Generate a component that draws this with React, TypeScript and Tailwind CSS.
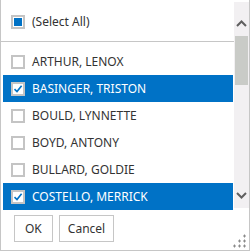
import React from 'react';

const names = [
    { name: 'ARTHUR, LENOX', checked: false },
    { name: 'BASINGER, TRISTON', checked: true },
    { name: 'BOULD, LYNNETTE', checked: false },
    { name: 'BOYD, ANTONY', checked: false },
    { name: 'BULLARD, GOLDIE', checked: false },
    { name: 'COSTELLO, MERRICK', checked: true },
];

const CheckBox: React.FC<{ checked?: boolean }> = ({ checked }) => (
    <div className="w-[14px] h-[14px] border-2 border-[#c4c4c4] bg-white flex items-center justify-center shrink-0">
        {checked && (
            <svg width="10" height="10" viewBox="0 0 10 10">
                <path d="M1.5 5.2 L4 7.6 L8.6 1.8" fill="none" stroke="#0072c6" strokeWidth="1.6" />
            </svg>
        )}
    </div>
);

export default function App() {
    return (
        <div
            className="w-[250px] h-[251px] bg-white border-l border-r border-b border-[#c6c6c6] flex flex-col text-[12px] text-[#333]"
            style={{ fontFamily: '"Noto Sans", "Open Sans", sans-serif' }}
        >
            <div className="h-[210px] flex">
                {/* list area */}
                <div className="flex-1 flex flex-col overflow-hidden">
                    <div className="h-[41px] shrink-0 flex items-center pl-[10px] gap-[7px] pt-[2px]">
                        <div className="w-[14px] h-[14px] border-2 border-[#c4c4c4] bg-white flex items-center justify-center">
                            <div className="w-[8px] h-[8px] bg-[#0072c6]" />
                        </div>
                        <span>(Select All)</span>
                    </div>
                    <div className="h-px bg-[#c6c6c6] shrink-0" />
                    <div className="pt-[6px] pl-[2px] pr-[1px] flex flex-col">
                        {names.map((n) => (
                            <div
                                key={n.name}
                                className={`h-[27px] shrink-0 flex items-center pl-[8px] gap-[7px] whitespace-nowrap ${n.checked ? 'bg-[#0072c6] text-white' : ''}`}
                            >
                                <CheckBox checked={n.checked} />
                                <span>{n.name}</span>
                            </div>
                        ))}
                    </div>
                </div>

                {/* scrollbar */}
                <div className="w-[15px] mt-[2px] h-[206px] bg-[#f2f0f2] flex flex-col items-center">
                    <div className="h-[34px] flex items-center justify-center pt-[8px]">
                        <svg width="11" height="7" viewBox="0 0 11 7">
                            <path d="M1 6 L5.5 1.5 L10 6" fill="none" stroke="#5f5f5f" strokeWidth="2" />
                        </svg>
                    </div>
                    <div className="w-[13px] h-[49px] bg-[#c9cbc7]" />
                    <div className="flex-1" />
                    <div className="h-[20px] flex items-center justify-center pb-[6px]">
                        <svg width="11" height="7" viewBox="0 0 11 7">
                            <path d="M1 1 L5.5 5.5 L10 1" fill="none" stroke="#5f5f5f" strokeWidth="2" />
                        </svg>
                    </div>
                </div>
            </div>

            {/* footer */}
            <div className="flex-1 flex items-start pt-[5px] pl-[13px] gap-[6px] relative">
                <button className="h-[27px] px-[10px] border border-[#c6c6c6] bg-white text-[#333] flex items-center justify-center leading-none">
                    <span>OK</span>
                </button>
                <button className="h-[27px] px-[8px] border border-[#c6c6c6] bg-white text-[#333] flex items-center justify-center leading-none">
                    <span>Cancel</span>
                </button>
                <svg className="absolute right-[2px] bottom-[2px]" width="14" height="14" viewBox="0 0 14 14">
                    {[
                        [11, 2],
                        [6, 7], [11, 7],
                        [1, 12], [6, 12], [11, 12],
                    ].map(([x, y], i) => (
                        <path key={i} d={`M${x - 1} ${y} H${x + 2} M${x + 0.5} ${y - 1.5} V${y + 1.5}`} stroke="#8a8a8a" strokeWidth="1" />
                    ))}
                </svg>
            </div>
        </div>
    );
}
